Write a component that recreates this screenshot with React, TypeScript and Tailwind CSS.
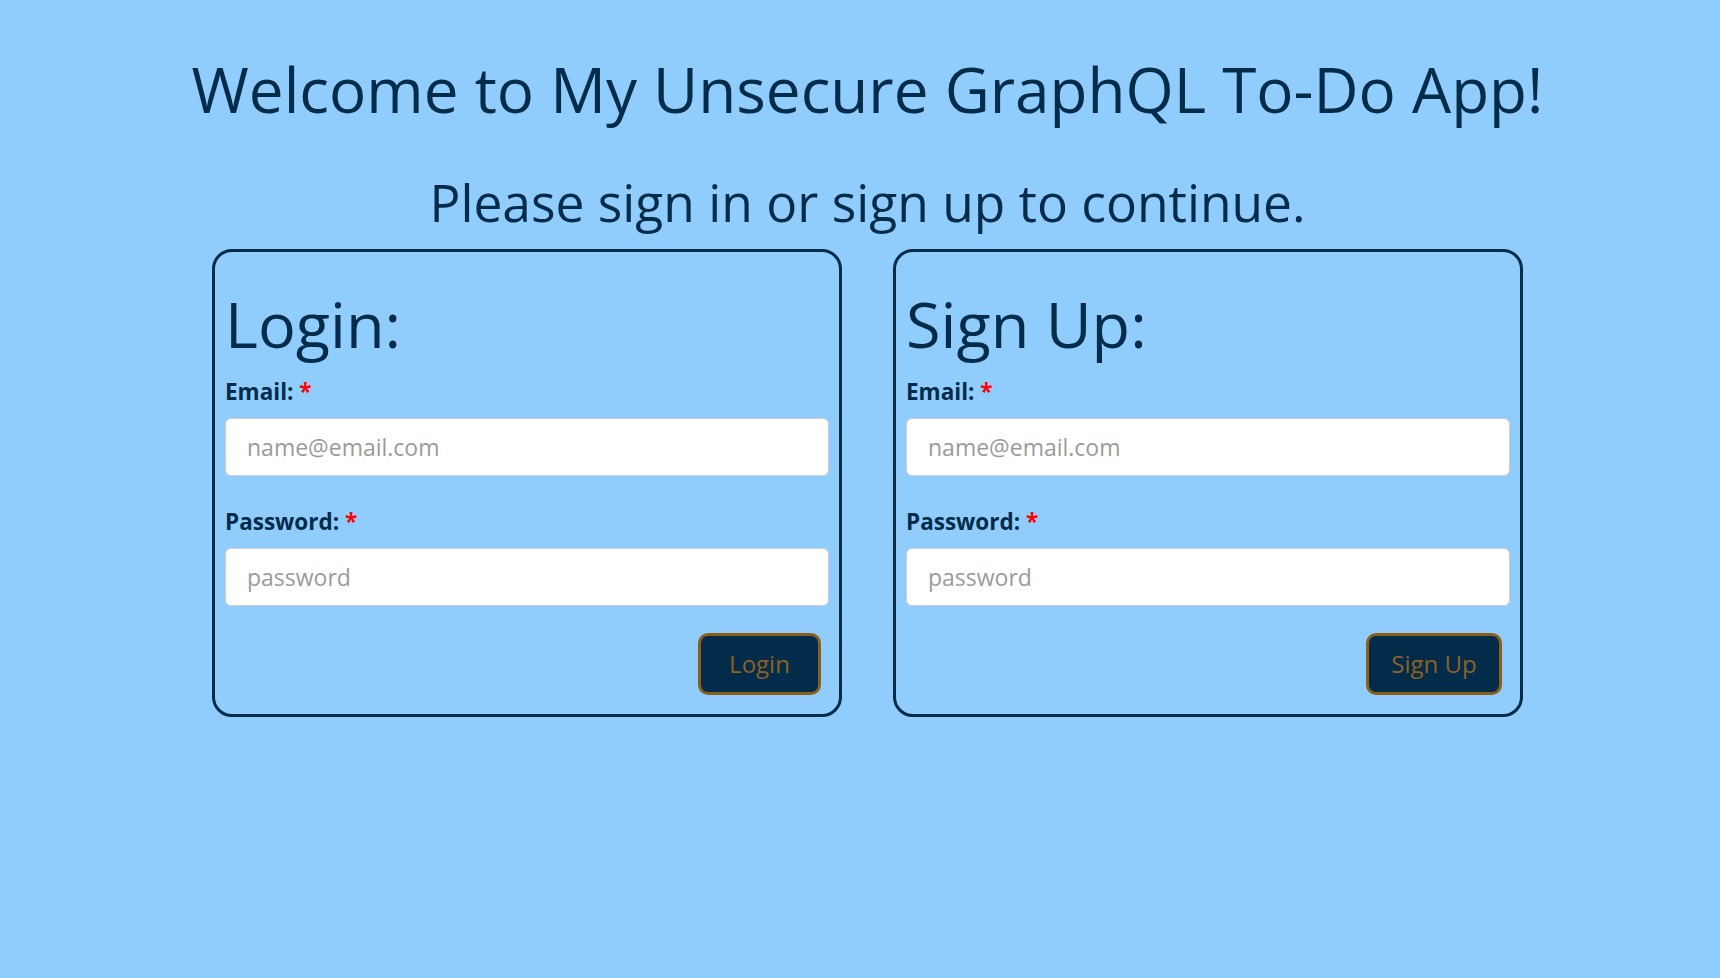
import React from "react";

function AuthCard({ title, button, buttonWidth }: { title: string; button: string; buttonWidth: string }) {
  return (
    <div className="w-[630px] border-[3px] border-[#032b4a] rounded-[20px] px-[10px] pt-[40px] pb-[19px] flex flex-col">
      <h2 className="text-[63px] leading-none font-normal">{title}</h2>
      <label className="mt-[25.5px] text-[22.5px] font-bold leading-none">
        Email: <span className="text-[#ff0000]">*</span>
      </label>
      <input
        type="email"
        placeholder="name@email.com"
        className="mt-[15px] h-[58px] w-full rounded-[6px] border border-[#cfcfcf] bg-white pl-[21px] text-[23px] text-[#333] placeholder:text-[#9b9b9b] outline-none"
      />
      <label className="mt-[34.5px] text-[22.5px] font-bold leading-none">
        Password: <span className="text-[#ff0000]">*</span>
      </label>
      <input
        type="password"
        placeholder="password"
        className="mt-[15px] h-[58px] w-full rounded-[6px] border border-[#cfcfcf] bg-white pl-[21px] text-[23px] text-[#333] placeholder:text-[#9b9b9b] outline-none"
      />
      <button
        className={`mt-[27px] self-end mr-[8px] h-[62px] ${buttonWidth} rounded-[10px] border-[3px] border-[#8b5e1c] bg-[#032b4a] text-[#8d6124] text-[24px] leading-none flex items-center justify-center`}
      >
        {button}
      </button>
    </div>
  );
}

export default function App() {
  return (
    <div className="min-h-screen bg-[#90cdfd] pl-[15px] pt-[58px] flex flex-col items-center font-['Open_Sans',sans-serif] text-[#032b4a]">
      <h1 className="text-[62px] leading-none font-normal">Welcome to My Unsecure GraphQL To-Do App!</h1>
      <h2 className="mt-[57px] text-[51.5px] leading-none font-normal">Please sign in or sign up to continue.</h2>
      <div className="mt-[20.5px] flex gap-[51px]">
        <AuthCard title="Login:" button="Login" buttonWidth="w-[123px]" />
        <AuthCard title="Sign Up:" button="Sign Up" buttonWidth="w-[136px]" />
      </div>
    </div>
  );
}
